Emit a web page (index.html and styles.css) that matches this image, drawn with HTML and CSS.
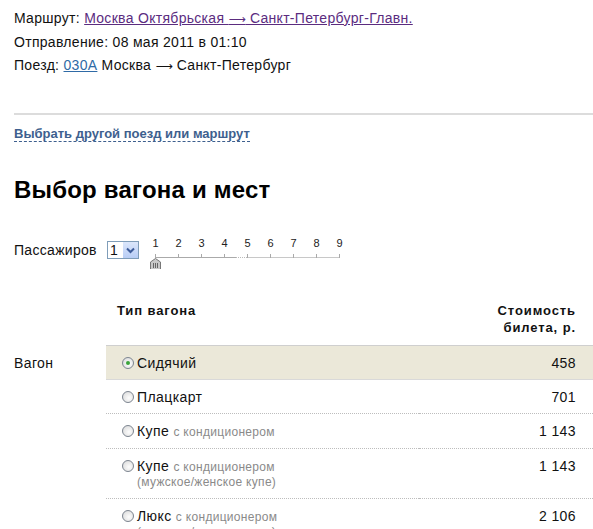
FILE: index.html
```html
<!DOCTYPE html>
<html lang="ru">
<head>
<meta charset="utf-8">
<link rel="stylesheet" href="styles.css">
</head>
<body>
<div class="info">
  <div>Маршрут: <a class="visited" href="#">Москва Октябрьская <span class="arr">⟶</span> Санкт-Петербург-Главн.</a></div>
  <div>Отправление: 08 мая 2011 в 01:10</div>
  <div>Поезд: <a class="link" href="#">030А</a> Москва <span class="arr">⟶</span> Санкт-Петербург</div>
</div>
<div class="rule"></div>
<div class="change"><a href="#">Выбрать другой поезд или маршрут</a></div>
<h1 class="title">Выбор вагона и мест</h1>
<div class="passengers">
  <span class="plabel">Пассажиров</span>
  <span class="select"><span class="selval">1</span><span class="selbtn"><svg width="9" height="7" viewBox="0 0 9 7"><path d="M1 1.5 L4.5 5 L8 1.5" fill="none" stroke="#3d5c9a" stroke-width="2"/></svg></span></span>
  <div class="slider">
    <div class="nums"><span>1</span><span>2</span><span>3</span><span>4</span><span>5</span><span>6</span><span>7</span><span>8</span><span>9</span></div>
    <svg class="track" width="210" height="20" viewBox="0 0 210 20">
      <line x1="11.5" y1="8.5" x2="92" y2="8.5" stroke="#aaa" stroke-width="1"/>
      <line x1="92" y1="8.5" x2="103" y2="8.5" stroke="#bbb" stroke-width="1" stroke-dasharray="1 1"/>
      <line x1="103" y1="8.5" x2="196" y2="8.5" stroke="#c8c8c8" stroke-width="1"/>
      <g stroke="#aaa" stroke-width="1">
        <line x1="11.5" y1="5" x2="11.5" y2="9"/>
        <line x1="34.5" y1="5" x2="34.5" y2="9"/>
        <line x1="57.5" y1="5" x2="57.5" y2="9"/>
        <line x1="80.5" y1="5" x2="80.5" y2="9"/>
        <line x1="103.5" y1="5" x2="103.5" y2="9"/>
        <line x1="126.5" y1="5" x2="126.5" y2="9"/>
        <line x1="149.5" y1="5" x2="149.5" y2="9"/>
        <line x1="172.5" y1="5" x2="172.5" y2="9"/>
        <line x1="195.5" y1="5" x2="195.5" y2="9"/>
      </g>
      <path d="M11.5 9.5 L16.5 13 L16.5 21 L6.5 21 L6.5 13 Z" fill="#c9c9c9" stroke="#777" stroke-width="1"/>
      <g stroke="#666" stroke-width="1">
        <line x1="9.5" y1="14" x2="9.5" y2="19"/>
        <line x1="11.5" y1="14" x2="11.5" y2="19"/>
        <line x1="13.5" y1="14" x2="13.5" y2="19"/>
      </g>
    </svg>
  </div>
</div>
<table class="cars">
  <colgroup><col class="c-label"><col><col></colgroup>
  <thead>
    <tr><th class="h-empty"></th><th class="h-type">Тип вагона</th><th class="h-price">Стоимость<br>билета, р.</th></tr>
  </thead>
  <tbody>
    <tr class="sel">
      <td class="lbl">Вагон</td>
      <td class="type"><span class="radio checked"></span>Сидячий</td>
      <td class="price">458</td>
    </tr>
    <tr>
      <td class="lbl"></td>
      <td class="type"><span class="radio"></span>Плацкарт</td>
      <td class="price">701</td>
    </tr>
    <tr>
      <td class="lbl"></td>
      <td class="type"><span class="radio"></span>Купе <span class="note">с кондиционером</span></td>
      <td class="price">1 143</td>
    </tr>
    <tr>
      <td class="lbl"></td>
      <td class="type"><span class="radio"></span>Купе <span class="note">с кондиционером</span><div class="note sub">(мужское/женское купе)</div></td>
      <td class="price">1 143</td>
    </tr>
    <tr>
      <td class="lbl"></td>
      <td class="type"><span class="radio"></span>Люкс <span class="note">с кондиционером</span><div class="note sub">(мужское/женское купе)</div></td>
      <td class="price">2 106</td>
    </tr>
  </tbody>
</table>
</body>
</html>
```
FILE: styles.css
```css
html, body {
  margin: 0;
  padding: 0;
  background: #fff;
}
body {
  font-family: "Liberation Sans", Arial, sans-serif;
  font-size: 14px;
  color: #111;
  padding: 7px 0 0 14px;
  overflow: hidden;
}
.info {
  line-height: 23px;
  letter-spacing: 0.3px;
}
.arr {
  font-family: "DejaVu Sans", sans-serif;
  font-size: 12px;
  letter-spacing: 0;
}
.visited {
  color: #5b2c7f;
  text-decoration: underline;
}
.link {
  color: #2f6aa6;
  text-decoration: underline;
}
.rule {
  margin-top: 35px;
  height: 2px;
  background: #dcdcdc;
}
.change {
  margin-top: 11px;
  line-height: 16px;
  font-size: 13px;
  font-weight: bold;
}
.change a {
  color: #3e5f8e;
  text-decoration: none;
  border-bottom: 1px dashed #3e5f8e;
}
.title {
  margin: 34px 0 0;
  font-size: 24px;
  line-height: 28px;
  font-weight: bold;
  letter-spacing: 0.2px;
  color: #000;
}
.passengers {
  margin-top: 33px;
  display: flex;
  align-items: flex-start;
  height: 40px;
}
.plabel {
  line-height: 18px;
  margin-top: 4px;
  width: 93px;
  letter-spacing: 0.3px;
}
.select {
  margin-top: 4px;
  width: 30px;
  height: 16px;
  border: 1px solid #7f9db9;
  display: flex;
  background: #fff;
}
.selval {
  flex: 1;
  line-height: 16px;
  padding-left: 2px;
  font-size: 14px;
}
.selbtn {
  width: 15px;
  height: 16px;
  background: linear-gradient(#dbe6fb, #b8cdf5);
  display: flex;
  align-items: center;
  justify-content: center;
}
.slider {
  margin-left: 5px;
  width: 210px;
}
.nums {
  display: flex;
  font-size: 11px;
  line-height: 12px;
  color: #222;
}
.nums span {
  width: 23px;
  text-align: center;
}
.track {
  display: block;
}
.cars {
  margin-left: -14px;
  margin-top: 22px;
  width: calc(100% + 14px);
  border-collapse: collapse;
}
.c-label {
  width: 106px;
}
.cars th {
  font-size: 13px;
  font-weight: bold;
  line-height: 17px;
  letter-spacing: 0.9px;
  vertical-align: top;
  padding: 3px 0 9px;
  border-bottom: 1px solid #cfcfcf;
  color: #111;
}
.cars th.h-empty {
  border-bottom: none;
}
.h-type {
  text-align: left;
  padding-left: 11px !important;
}
.h-price {
  text-align: right;
  padding-right: 17px !important;
}
.cars td {
  vertical-align: top;
  padding: 9px 0 8px;
  line-height: 16px;
  letter-spacing: 0.4px;
  border-bottom: 1px dotted #bdbdbd;
}
.cars td.lbl {
  padding-left: 14px;
  border-bottom: none;
}
.cars tr.sel td.type, .cars tr.sel td.price {
  background: #ebe8d9;
  border-bottom: 1px solid #d9d9d9;
}
.type {
  padding-left: 16px !important;
}
.price {
  text-align: right;
  padding-right: 17px !important;
}
.radio {
  display: inline-block;
  box-sizing: border-box;
  width: 12px;
  height: 12px;
  border-radius: 50%;
  border: 1px solid #7d8590;
  background: radial-gradient(circle at 60% 60%, #fdfdfd 0%, #e6e6e6 60%, #cfd2d6 100%);
  vertical-align: -1px;
  margin-right: 3px;
  position: relative;
}
.radio.checked::after {
  content: "";
  position: absolute;
  left: 3px;
  top: 3px;
  width: 4px;
  height: 4px;
  border-radius: 50%;
  background: #3aa33a;
}
.note {
  font-size: 12px;
  color: #8a8a8a;
  letter-spacing: 0.3px;
}
.sub {
  line-height: 15px;
  padding-left: 15px;
}
```
